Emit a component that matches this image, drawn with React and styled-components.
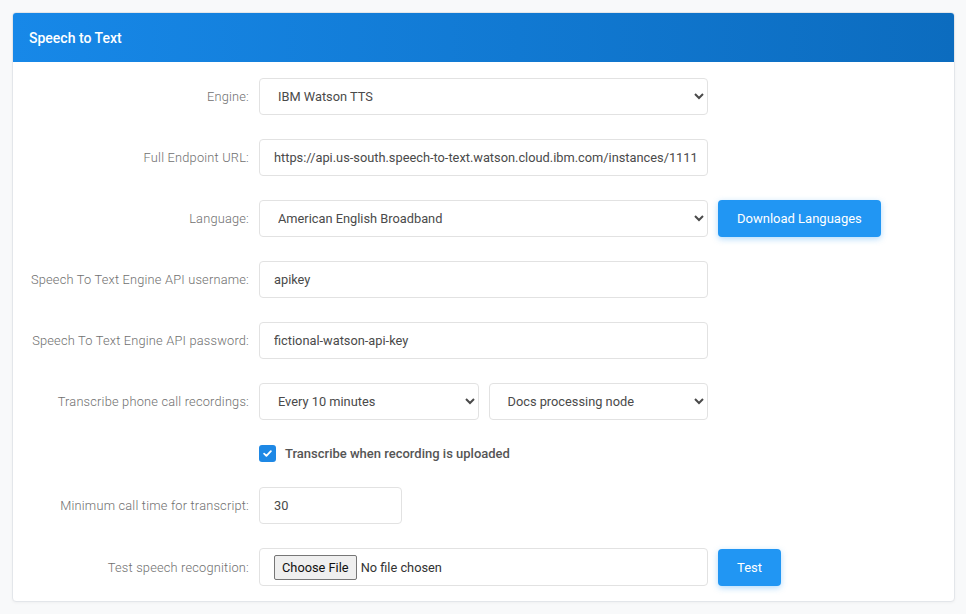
import styled, { createGlobalStyle } from "styled-components";

const GlobalStyle = createGlobalStyle`
  body {
    margin: 0;
    background: #f8f9fa;
    font-family: Roboto, "Liberation Sans", sans-serif;
  }
`;

const Page = styled.div`
  padding: 12px 11px 12px 12px;
`;

const Card = styled.div`
  background: #fff;
  border: 1px solid #e3e6ea;
  border-radius: 4px;
  overflow: hidden;
  box-shadow: 0 1px 3px rgba(0, 0, 0, 0.04);
`;

const CardHeader = styled.div`
  height: 49px;
  display: flex;
  align-items: center;
  padding: 0 16px;
  background: linear-gradient(90deg, #1788e8 0%, #0c6cbf 100%);
`;

const CardTitle = styled.h2`
  margin: 0;
  font-size: 14px;
  font-weight: 500;
  color: #fff;
`;

const CardBody = styled.form`
  display: flex;
  flex-direction: column;
  gap: 24px;
  padding: 16px 0 15px;
`;

const Row = styled.div`
  display: flex;
  align-items: center;
  gap: 10px;
`;

const Label = styled.label`
  width: 236px;
  flex: none;
  text-align: right;
  font-size: 12.8px;
  font-weight: 300;
  color: #6f6f6f;
  letter-spacing: 0.2px;
`;

const Field = styled.div`
  display: flex;
  gap: 10px;
  width: ${(p) => p.$width || 449}px;
  flex: none;
`;

const controlBase = `
  box-sizing: border-box;
  height: 37px;
  border: 1px solid #e2e2e2;
  border-radius: 4px;
  background: #fff;
  font-family: Roboto, "Liberation Sans", sans-serif;
  font-size: 12.8px;
  color: #4a4a4a;
  outline: none;
`;

const TextInput = styled.input`
  ${controlBase}
  width: 100%;
  padding: 0 0 0 14px;
`;

const Select = styled.select`
  ${controlBase}
  flex: 1;
  min-width: 0;
  padding: 0 10px 0 14px;
`;

const FileInput = styled.input`
  ${controlBase}
  width: 100%;
  height: 38px;
  padding: 0 14px;
  color: #333;

  &::file-selector-button {
    font-family: Roboto, "Liberation Sans", sans-serif;
    font-size: 12.8px;
    height: 25px;
    margin: 6px 4px 0 0;
    padding: 0 7px;
    border: 1px solid #767676;
    border-radius: 2px;
    background: #efefef;
    color: #111;
  }
`;

const Button = styled.button`
  height: 37px;
  padding: 0 ${(p) => p.$pad || 19}px;
  border: none;
  border-radius: 4px;
  background: #2196f3;
  color: #fff;
  font-family: Roboto, "Liberation Sans", sans-serif;
  font-size: 13px;
  box-shadow: 0 2px 6px rgba(33, 150, 243, 0.35);
  cursor: pointer;
`;

const CheckRow = styled.label`
  display: flex;
  align-items: center;
  gap: 9px;
  min-height: 19px;
  margin-left: 246px;
  font-size: 13px;
  font-weight: 500;
  color: #555;
  cursor: pointer;
`;

const CheckBox = styled.span`
  width: 17px;
  height: 17px;
  border-radius: 3px;
  background: #1e88e5;
  display: flex;
  align-items: center;
  justify-content: center;
`;

function Check() {
  return (
    <CheckBox>
      <svg width="11" height="11" viewBox="0 0 12 12">
        <path
          d="M2.3 6.2 L4.8 8.6 L9.7 3.4"
          fill="none"
          stroke="#fff"
          strokeWidth="2"
          strokeLinecap="round"
          strokeLinejoin="round"
        />
      </svg>
    </CheckBox>
  );
}

export default function App() {
  return (
    <>
      <GlobalStyle />
      <Page>
        <Card>
          <CardHeader>
            <CardTitle>Speech to Text</CardTitle>
          </CardHeader>
          <CardBody onSubmit={(e) => e.preventDefault()}>
            <Row>
              <Label>Engine:</Label>
              <Field>
                <Select defaultValue="ibm">
                  <option value="ibm">IBM Watson TTS</option>
                </Select>
              </Field>
            </Row>
            <Row>
              <Label>Full Endpoint URL:</Label>
              <Field>
                <TextInput defaultValue="https://api.us-south.speech-to-text.watson.cloud.ibm.com/instances/1111" />
              </Field>
            </Row>
            <Row>
              <Label>Language:</Label>
              <Field>
                <Select defaultValue="en">
                  <option value="en">American English Broadband</option>
                </Select>
              </Field>
              <Button type="button">Download Languages</Button>
            </Row>
            <Row>
              <Label>Speech To Text Engine API username:</Label>
              <Field>
                <TextInput defaultValue="apikey" />
              </Field>
            </Row>
            <Row>
              <Label>Speech To Text Engine API password:</Label>
              <Field>
                <TextInput defaultValue="fictional-watson-api-key" />
              </Field>
            </Row>
            <Row>
              <Label>Transcribe phone call recordings:</Label>
              <Field>
                <Select defaultValue="10">
                  <option value="10">Every 10 minutes</option>
                </Select>
                <Select defaultValue="docs">
                  <option value="docs">Docs processing node</option>
                </Select>
              </Field>
            </Row>
            <CheckRow>
              <Check />
              Transcribe when recording is uploaded
            </CheckRow>
            <Row>
              <Label>Minimum call time for transcript:</Label>
              <Field $width={143}>
                <TextInput defaultValue="30" />
              </Field>
            </Row>
            <Row>
              <Label>Test speech recognition:</Label>
              <Field>
                <FileInput type="file" />
              </Field>
              <Button type="button" $pad={19}>
                Test
              </Button>
            </Row>
          </CardBody>
        </Card>
      </Page>
    </>
  );
}
